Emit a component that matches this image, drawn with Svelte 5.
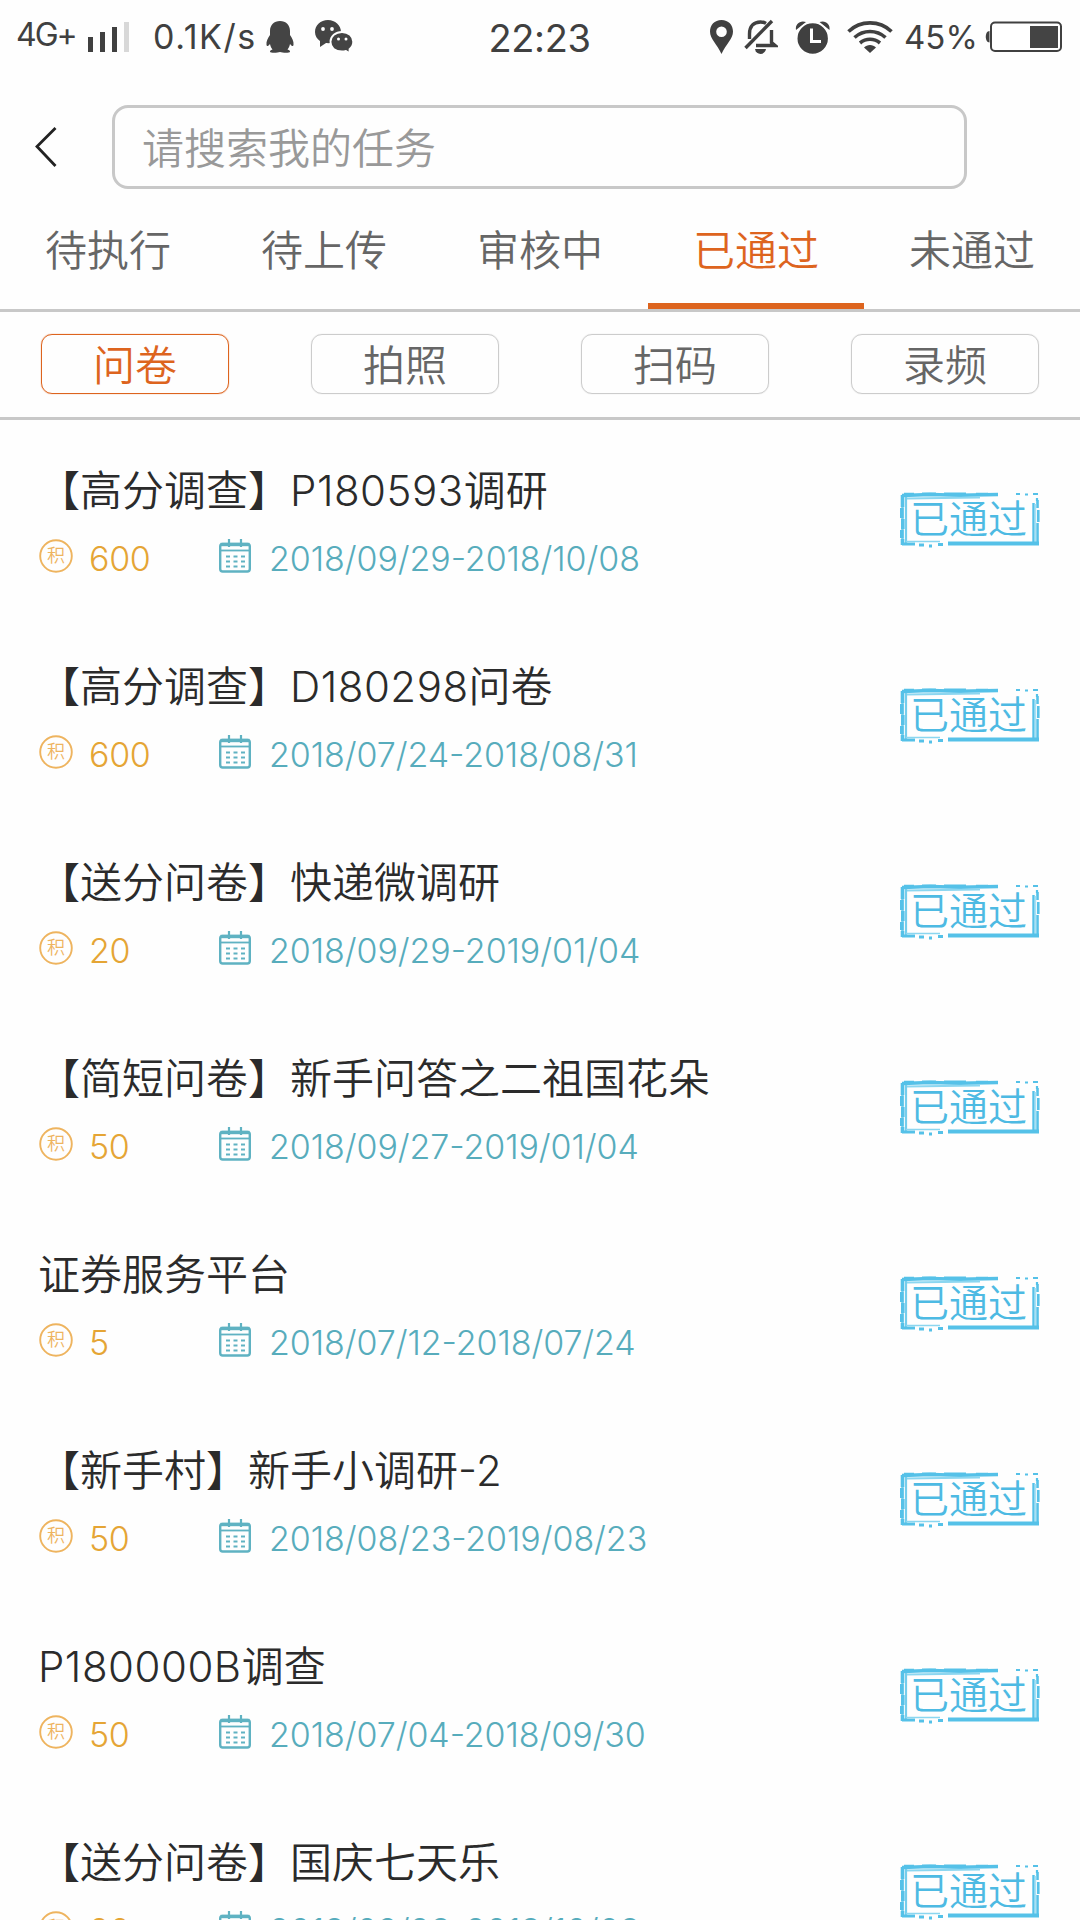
<script>
  const tabs = ['待执行', '待上传', '审核中', '已通过', '未通过'];
  const types = ['问卷', '拍照', '扫码', '录频'];

  let activeTab = $state(3);
  let activeType = $state(0);
  let keyword = $state('');

  const tasks = [
    { title: '【高分调查】P180593调研', points: 600, date: '2018/09/29-2018/10/08' },
    { title: '【高分调查】D180298问卷', points: 600, date: '2018/07/24-2018/08/31' },
    { title: '【送分问卷】快递微调研', points: 20, date: '2018/09/29-2019/01/04' },
    { title: '【简短问卷】新手问答之二祖国花朵', points: 50, date: '2018/09/27-2019/01/04' },
    { title: '证券服务平台', points: 5, date: '2018/07/12-2018/07/24' },
    { title: '【新手村】新手小调研-2', points: 50, date: '2018/08/23-2019/08/23' },
    { title: 'P180000B调查', points: 50, date: '2018/07/04-2018/09/30' },
    { title: '【送分问卷】国庆七天乐', points: 20, date: '2018/09/28-2018/10/08' }
  ];

  // split out project codes so they can be tracked separately from the Chinese text
  function splitTitle(title) {
    return title.split(/([A-Z0-9-]+)/).filter(Boolean);
  }
</script>

<div class="screen">
  <div class="status">
    <div class="side left">
      <span class="net">4G+</span>
      <svg class="signal" width="42" height="32" viewBox="0 0 42 32">
        <path d="M0 16h5v15H0zM12 11h5v20h-5zM24 6h5v25h-5z" fill="#404040" />
        <path d="M36 1h5v30h-5z" fill="#d8d8d8" />
      </svg>
      <span class="speed">0.1K/s</span>
      <svg class="qq" width="28" height="34" viewBox="0 0 28 34">
        <path d="M14 1C8 1 4 5 4 11v4C2 18 0 21 .5 25c.3 2 2 1 3.500-1 .4 2 1.200 4 2.500 5.500-2 .5-2.500 1.300-2.500 2.200 0 1.300 7 1.300 10 .3 3 1 10 1 10-.3 0-.9-.5-1.700-2.500-2.200C22.800 28 23.600 26 24 24c1.500 2 3.200 3 3.500 1C28 21 26 18 24 15v-4C24 5 20 1 14 1z" fill="#444" />
      </svg>
      <svg class="wechat" width="40" height="36" viewBox="0 0 40 36">
        <path d="M14 1C6.500 1 1 6 1 13c0 4 2 7 5 9v6l6-4c8 1 15-4 15-11S21 1 14 1z" fill="#444" />
        <circle cx="9" cy="10" r="1.900" fill="#fff" /><circle cx="18" cy="10" r="1.900" fill="#fff" />
        <path d="M28 13c-6.500 0-11.500 4-11.500 9.800S21 32.500 28 32.500c1.500 0 2.800-.2 4-.6l3.500 2.300v-4c2.400-1.800 3.700-4.300 3.700-7.400C39.200 17 34.500 13 28 13z" fill="#444" stroke="#fff" stroke-width="1.800" />
        <circle cx="24.500" cy="20" r="1.500" fill="#fff" /><circle cx="32" cy="20" r="1.500" fill="#fff" />
      </svg>
    </div>
    <span class="clock">22:23</span>
    <div class="side right">
      <svg class="pin" width="25" height="36" viewBox="0 0 25 36">
        <path fill-rule="evenodd" d="M12.500 1C5.500 1 1 6 1 12.500 1 20 8 25 12.500 35 17 25 24 20 24 12.500 24 6 19.500 1 12.500 1zm0 6.500a5.300 5.300 0 1 1 0 10.600 5.300 5.300 0 0 1 0-10.600z" fill="#404040" />
      </svg>
      <svg class="bell" width="34" height="36" viewBox="0 0 34 36" fill="none" stroke="#404040">
        <path d="M5.500 20v-5C5.500 7 10 3 16.500 3c2 0 4 .5 5.500 1.400M27.500 11v12.500l3.500 3H12" stroke-width="3.400" />
        <path d="M1.500 29 28 2" stroke-width="3.400" />
        <path d="M11 30h11c-1 6.500-10 6.500-11 0z" fill="#404040" stroke="none" />
      </svg>
      <svg class="alarm" width="36" height="35" viewBox="0 0 36 35">
        <path d="M1 10C0 4 5 0 11 2zM34.500 10C35.500 4 30.500 0 24.500 2z" fill="#404040" />
        <circle cx="17.700" cy="18.500" r="16" fill="#404040" stroke="#fff" stroke-width="1.600" />
        <path d="M16.500 8.500v13H26" fill="none" stroke="#fff" stroke-width="3" />
      </svg>
      <svg class="wifi" width="46" height="34" viewBox="0 0 46 34" fill="none" stroke="#404040" stroke-width="3.600">
        <path d="M1.500 11.500c12-11.500 31-11.500 43 0M7.500 17.500c9-8 22-8 31 0M13 23c6-5 14-5 20 0" />
        <path d="M17 27.500c3-3.500 9-3.500 12 0L23 33z" fill="#404040" stroke="none" />
      </svg>
      <span class="percent">45%</span>
      <svg class="battery" width="78" height="32" viewBox="0 0 78 32">
        <path d="M4.500 10C-.5 10-.5 21.500 4.500 21.500z" fill="#404040" />
        <rect x="6" y="1.500" width="70" height="28.500" rx="4" fill="#fff" stroke="#404040" stroke-width="2" />
        <path d="M45 5h28v22H45z" fill="#444" />
      </svg>
    </div>
  </div>

  <div class="searchbar">
    <button class="back" aria-label="返回">
      <svg width="24" height="40" viewBox="0 0 24 40" fill="none" stroke="#222" stroke-width="2.800">
        <path d="M21.500 1 3 19.500 21.500 39" />
      </svg>
    </button>
    <input type="text" placeholder="请搜索我的任务" bind:value={keyword} />
  </div>

  <div class="tabs">
    {#each tabs as tab, i}
      <button class="tab" class:active={activeTab === i} onclick={() => (activeTab = i)}>{tab}</button>
    {/each}
  </div>

  <div class="types">
    {#each types as type, i}
      <button class="type" class:active={activeType === i} onclick={() => (activeType = i)}>{type}</button>
    {/each}
  </div>

  <div class="list">
    {#each tasks as task}
      <div class="task">
        <div class="info">
          <div class="title">
            {#each splitTitle(task.title) as part}<span class:code={/^[A-Z0-9-]/.test(part)}>{part}</span>{/each}
          </div>
          <div class="meta">
            <svg class="coin" width="34" height="34" viewBox="0 0 34 34">
              <circle cx="17" cy="17" r="15.800" fill="none" stroke="#eeb45f" stroke-width="1.900" />
              <text x="17" y="23" text-anchor="middle">积</text>
            </svg>
            <span class="points">{task.points}</span>
            <svg class="calendar" width="32" height="34" viewBox="0 0 32 34" fill="none" stroke="#5fb2c2">
              <rect x="1.200" y="5" width="29.600" height="27.500" rx="2.500" stroke-width="2.400" />
              <path d="M1.500 5.500h29" stroke-width="3.400" />
              <path d="M1 11.500h30" stroke-width="1.800" />
              <path d="M10 0v8M22 0v8" stroke-width="2.200" />
              <path d="M7 17.500h19M7 22.500h19M7 27.500h19" stroke-width="1.800" stroke-dasharray="4 3.500" />
            </svg>
            <span class="date">{task.date}</span>
          </div>
        </div>
        <svg class="stamp" width="140" height="56" viewBox="0 0 140 56" fill="none" stroke="#55c1e8">
          <path d="M2 3.500 30 2.500 60 3.200 98 2.500" stroke-width="3.400" />
          <path d="M4 1.500h10M22 1.300h14M44 1.200h22M76 1.500h12" stroke-width="1.500" />
          <path d="M6 6.500 80 5.500" stroke-width="2" stroke="#8bd6f0" />
          <path d="M116 2h4M125 2.500h3M133 2h5M137 6v3" stroke-width="2.200" />
          <path d="M2.500 3v50" stroke-width="2.600" stroke="#74cdec" />
          <path d="M2.500 3v12M1.800 16v10M2.800 27v10M1.800 38v8M2.500 47v6" stroke-width="3.600" />
          <path d="M6 5v46" stroke-width="2.200" stroke="#74cdec" />
          <path d="M133.500 11v40" stroke-width="2.400" />
          <path d="M137.500 8v8M138.300 18v12M137.500 31v21" stroke-width="2.600" />
          <path d="M135.500 12v38" stroke-width="1.500" stroke="#a8e0f4" />
          <path d="M2 52h13M19 53h5M29 54h3M38 52.500h5" stroke-width="3" />
          <path d="M6 49.500h34" stroke-width="1.600" stroke="#8bd6f0" />
          <path d="M48 51.500h91" stroke-width="4" />
          <text x="10" y="41">已通过</text>
        </svg>
      </div>
    {/each}
  </div>
</div>

<style>
  :global(body) {
    background: #fefefe;
    overflow: hidden;
  }

  .screen {
    width: 1080px;
    height: 1920px;
    overflow: hidden;
    display: flex;
    flex-direction: column;
    background: #fefefe;
    font-family: Inter, 'Noto Sans CJK SC DemiLight', 'Noto Sans CJK SC', sans-serif;
    font-weight: 350;
    color: #2b2b2b;
  }

  svg {
    display: block;
    flex: none;
  }

  button,
  input {
    font: inherit;
    background: none;
    border: none;
    margin: 0;
    padding: 0;
    box-sizing: border-box;
  }

  /* status bar */
  .status {
    flex: none;
    height: 74px;
    display: flex;
    align-items: center;
    color: #404040;
    font-weight: 400;
    line-height: 40px;
    white-space: nowrap;
  }

  .side {
    flex: 1;
    display: flex;
    align-items: center;
  }

  .left {
    padding-left: 16px;
  }

  .right {
    justify-content: flex-end;
    padding-right: 17px;
  }

  .net {
    width: 72px;
    font-size: 32px;
    letter-spacing: -2px;
    padding-bottom: 4px;
  }

  .speed {
    width: 113px;
    margin-left: 23px;
    font-size: 34px;
    letter-spacing: 1.6px;
  }

  .wechat {
    margin-left: 20px;
  }

  .clock {
    padding-top: 2px;
    font-size: 38px;
    letter-spacing: -0.4px;
  }

  .bell {
    margin-left: 10px;
  }

  .alarm {
    margin-left: 17px;
  }

  .wifi {
    margin-left: 16px;
  }

  .percent {
    width: 81px;
    margin-left: 11px;
    font-size: 33px;
  }

  /* search */
  .searchbar {
    flex: none;
    height: 138px;
    display: flex;
    align-items: flex-start;
    padding-top: 31px;
    box-sizing: border-box;
  }

  .back {
    width: 112px;
    height: 84px;
    padding-left: 34px;
  }

  input {
    width: 855px;
    height: 84px;
    padding: 2px 27px 0;
    border: 3px solid #c8c8c8;
    border-radius: 16px;
    font-size: 42px;
    outline: none;
  }

  input::placeholder {
    color: #999;
    opacity: 1;
  }

  /* tabs */
  .tabs {
    flex: none;
    height: 100px;
    display: flex;
    border-bottom: 3px solid #c8c8c8;
    box-sizing: border-box;
  }

  .tab {
    flex: 1;
    padding-bottom: 21px;
    border-bottom: 6px solid transparent;
    font-size: 42px;
    color: #666;
  }

  .tab.active {
    color: #dd641e;
    border-color: #dd641e;
  }

  .types {
    flex: none;
    height: 108px;
    display: flex;
    justify-content: space-between;
    padding: 22px 41px 0;
    border-bottom: 3px solid #c8c8c8;
    box-sizing: border-box;
  }

  .type {
    width: 188px;
    height: 60px;
    padding-top: 3px;
    border: 1.5px solid #ccc;
    border-radius: 11px;
    font-size: 42px;
    line-height: 56px;
    color: #666;
    box-shadow: 0 0 1px #ccc;
  }

  .type.active {
    color: #dd641e;
    border-color: #dd641e;
    box-shadow: 0 0 1px #dd641e;
  }

  /* task list */
  .task {
    height: 196px;
    display: flex;
    align-items: flex-start;
    justify-content: space-between;
    padding: 39px 40px 0 38px;
    box-sizing: border-box;
  }

  .title {
    height: 62px;
    padding-top: 1px;
    line-height: 62px;
    font-size: 42px;
    white-space: nowrap;
  }

  .code {
    letter-spacing: 0.5px;
    font-feature-settings: 'case';
  }

  .meta {
    display: flex;
    align-items: center;
    height: 40px;
    margin-top: 14px;
    padding-left: 1px;
    font-size: 34px;
    line-height: 40px;
  }

  .coin text {
    font-size: 18px;
    fill: #eeb45f;
  }

  .points,
  .date {
    padding-top: 5px;
  }

  .points {
    width: 131px;
    padding-left: 16px;
    box-sizing: border-box;
    color: #e5a535;
    letter-spacing: -0.3px;
  }

  .calendar {
    margin-left: 15px;
  }

  .date {
    margin-left: 18px;
    color: #57acbc;
    letter-spacing: -0.08px;
    font-feature-settings: 'case';
  }

  .stamp {
    margin-top: 33px;
  }

  .stamp text {
    font-size: 39px;
    fill: #4dbae3;
    stroke: none;
  }
</style>
